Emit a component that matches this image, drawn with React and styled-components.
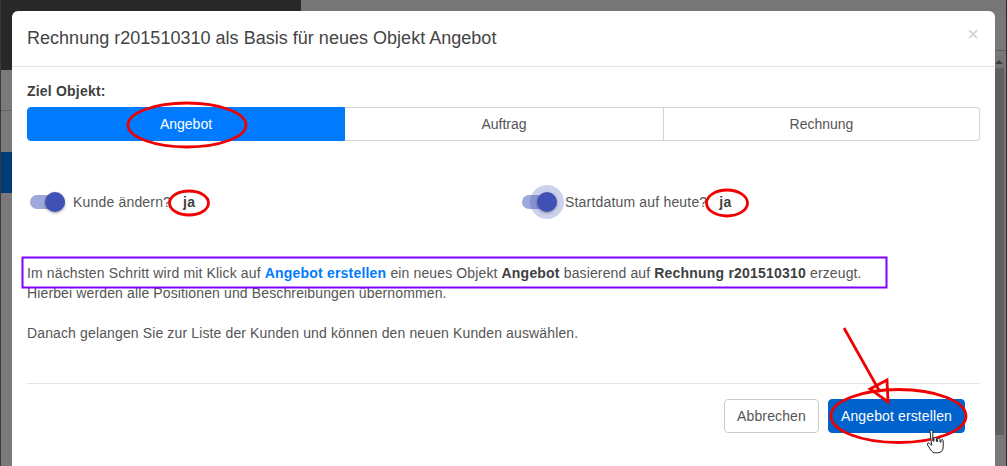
import React from "react";
import styled, { createGlobalStyle } from "styled-components";

const Global = createGlobalStyle`
  html, body { margin: 0; padding: 0; background: #787878; }
  body { font-family: "Liberation Sans", Arial, sans-serif; overflow: hidden; }
  * { box-sizing: border-box; }
`;

const Page = styled.div`
  position: relative;
  width: 1007px;
  height: 466px;
  overflow: hidden;
  display: flex;
  background: #787878;
  border-left: 1px solid #3a3a3a;
  border-right: 1px solid #2a2a2a;
`;
const Sidebar = styled.aside`
  width: 300px;
  display: flex;
  flex-direction: column;
  flex: none;
`;
const Brand = styled.div`
  height: 70px;
  background: #282828;
`;
const SideItem = styled.div`
  height: ${(p) => p.$h}px;
  flex: ${(p) => (p.$grow ? 1 : "none")};
  background: ${(p) => p.$bg || "#7a7a7a"};
  border-bottom: ${(p) => (p.$line ? "1px solid #636363" : "none")};
`;
const Main = styled.main`
  flex: 1;
  display: flex;
  flex-direction: column;
`;
const MainTop = styled.div`
  height: 51px;
  flex: none;
  border-bottom: 1px solid #5e5e5e;
  border-top: 11px solid #767676;
`;
const ScrollRow = styled.div`
  flex: 1;
  display: flex;
  justify-content: flex-end;
  padding: 5px 2px 31px 0;
`;
const Scrollbar = styled.div`
  width: 10px;
  display: flex;
  flex-direction: column;
  background: #5f5f5f;
`;
const ScrollCap = styled.div`
  height: 12px;
  background: #747474;
  display: flex;
  justify-content: center;
  align-items: center;
  &::before {
    content: "";
    border: 4px solid transparent;
    border-top: 0;
    border-bottom: 4px solid #3e3e3e;
  }
`;

const Modal = styled.div`
  position: absolute;
  left: 11px;
  top: 11px;
  width: 983px;
  height: 470px;
  background: #fff;
  border-radius: 6px;
  display: flex;
  flex-direction: column;
  color: #555;
`;
const Header = styled.header`
  height: 56px;
  flex: none;
  padding: 0 15px;
  border-bottom: 1px solid #e4e4e4;
  display: flex;
  align-items: center;
  justify-content: space-between;
`;
const Title = styled.h5`
  margin: 0;
  font-size: 18px;
  font-weight: 400;
  color: #444;
  letter-spacing: 0.02px;
`;
const Close = styled.span`
  font-size: 20px;
  font-weight: 400;
  line-height: 20px;
  color: #cfcfcf;
  margin: 0 1px 9px 0;
`;
const Body = styled.div`
  padding: 16px 15px 0;
  height: 316px;
  flex: none;
  display: flex;
  flex-direction: column;
`;
const Label = styled.div`
  font-size: 14px;
  font-weight: 700;
  color: #3f3f3f;
  height: 24px;
  letter-spacing: 0.2px;
`;
const Segments = styled.div`
  display: grid;
  grid-template-columns: 318px 319px 1fr;
  height: 34px;
  flex: none;
`;
const Segment = styled.div`
  display: flex;
  align-items: center;
  justify-content: center;
  font-size: 14px;
  background: ${(p) => (p.$active ? "#007bff" : "#fff")};
  color: ${(p) => (p.$active ? "#fff" : "#555")};
  border: 1px solid ${(p) => (p.$active ? "#007bff" : "#ced4da")};
  border-left-width: ${(p) => (p.$first ? 1 : 0)}px;
  border-radius: ${(p) => (p.$first ? "4px 0 0 4px" : p.$last ? "0 4px 4px 0" : "0")};
`;
const ToggleGrid = styled.div`
  display: grid;
  grid-template-columns: 492px 1fr;
  margin-top: 41px;
  height: 40px;
  align-items: center;
`;
const ToggleField = styled.div`
  display: flex;
  align-items: center;
  padding-left: 3px;
  font-size: 14px;
  letter-spacing: 0.18px;
`;
const Toggle = styled.span`
  position: relative;
  width: 35px;
  height: 14px;
  margin-right: 8px;
  border-radius: 7px;
  background: #9fa8da;
  flex: none;
`;
const Knob = styled.span`
  position: absolute;
  top: -3px;
  width: 20px;
  height: 20px;
  left: 15px;
  border-radius: 50%;
  background: #3f51b5;
  box-shadow: 0 1px 3px rgba(0, 0, 0, 0.4);
  ${(p) => p.$focus && "outline: 7px solid rgba(63, 81, 181, 0.26); outline-offset: 0;"}
`;
const Value = styled.b`
  margin-left: 12px;
  font-size: 14px;
  color: #3f3f3f;
`;
const Copy = styled.p`
  margin: 41px 0 0;
  font-size: 14px;
  line-height: 20px;
  letter-spacing: 0.13px;
`;
const Strong = styled.b`
  color: #3f3f3f;
  letter-spacing: 0.2px;
`;
const Accent = styled.b`
  color: #007bff;
  letter-spacing: 0.2px;
`;
const Footer = styled.footer`
  margin: 0 15px;
  padding-top: 15px;
  border-top: 1px solid #e4e4e4;
  display: flex;
  justify-content: flex-end;
  gap: 9px;
  padding-right: 15px;
`;
const Button = styled.button`
  height: 34px;
  width: ${(p) => p.$w}px;
  font: 14px "Liberation Sans", Arial, sans-serif;
  letter-spacing: 0.12px;
  border-radius: 4px;
  padding: 0;
  border: 1px solid ${(p) => (p.$primary ? "#0062cc" : "#ccc")};
  background: ${(p) => (p.$primary ? "#0062cc" : "#fff")};
  color: ${(p) => (p.$primary ? "#fff" : "#555")};
`;
const Annotations = styled.svg`
  position: absolute;
  left: -1px;
  top: 0;
  pointer-events: none;
`;

export default function App() {
  return (
    <>
      <Global />
      <Page>
        <Sidebar>
          <Brand />
          <SideItem $h={41} $line />
          <SideItem $h={41} />
          <SideItem $h={41} $bg="#003a78" />
          <SideItem $grow />
        </Sidebar>
        <Main>
          <MainTop />
          <ScrollRow>
            <Scrollbar>
              <ScrollCap />
            </Scrollbar>
          </ScrollRow>
        </Main>
        <Modal>
          <Header>
            <Title>Rechnung r201510310 als Basis für neues Objekt Angebot</Title>
            <Close>×</Close>
          </Header>
          <Body>
            <Label>Ziel Objekt:</Label>
            <Segments>
              <Segment $active $first>Angebot</Segment>
              <Segment>Auftrag</Segment>
              <Segment $last>Rechnung</Segment>
            </Segments>
            <ToggleGrid>
              <ToggleField>
                <Toggle><Knob /></Toggle>
                Kunde ändern?
                <Value>ja</Value>
              </ToggleField>
              <ToggleField>
                <Toggle><Knob $focus /></Toggle>
                Startdatum auf heute?
                <Value>ja</Value>
              </ToggleField>
            </ToggleGrid>
            <Copy>
              Im nächsten Schritt wird mit Klick auf <Accent>Angebot erstellen</Accent> ein neues Objekt{" "}
              <Strong>Angebot</Strong> basierend auf <Strong>Rechnung r201510310</Strong> erzeugt.
              <br />
              Hierbei werden alle Positionen und Beschreibungen übernommen.
              <br />
              <br />
              Danach gelangen Sie zur Liste der Kunden und können den neuen Kunden auswählen.
            </Copy>
          </Body>
          <Footer>
            <Button $w={95}>Abbrechen</Button>
            <Button $w={137} $primary>Angebot erstellen</Button>
          </Footer>
        </Modal>
        <Annotations width="1007" height="466" viewBox="0 0 1007 466" fill="none">
          <g stroke="#f00000" strokeWidth="2.8">
            <ellipse cx="187" cy="125" rx="59" ry="22" />
            <ellipse cx="189" cy="203" rx="19.5" ry="12" />
            <ellipse cx="727" cy="203" rx="20.5" ry="13" />
            <ellipse cx="898.5" cy="416" rx="67.5" ry="26.5" />
            <line x1="844" y1="328" x2="880" y2="392" />
            <polygon points="888,402 887,380 870,389" />
          </g>
          <rect x="22.5" y="257.5" width="864" height="30" stroke="#7f00ff" strokeWidth="2" />
          <path
            d="M930 431.5c0-1.8 2.8-1.8 2.8 0v9.5l1.2.2v-2.6c0-1.5 2.4-1.5 2.4 0v2.8l1.2.2v-2.2c0-1.5 2.4-1.5 2.4 0v2.6l1 .2v-1.6c0-1.4 2.2-1.4 2.2 0v6.4c0 3.4-2 5.8-5.6 5.8h-2c-2.4 0-3.6-1-4.8-2.8l-3.2-5c-1-1.6 1-2.9 2.2-1.6l1.9 2z"
            fill="#fff"
            stroke="#222"
            strokeWidth="1"
          />
        </Annotations>
      </Page>
    </>
  );
}
